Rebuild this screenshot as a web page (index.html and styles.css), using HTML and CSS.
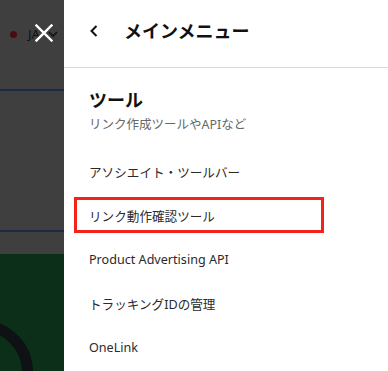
FILE: index.html
```html
<!DOCTYPE html>
<html lang="ja">
<head>
<meta charset="utf-8">
<link rel="stylesheet" href="styles.css">
</head>
<body>
<div class="page">
  <div class="backdrop">
    <div class="topbar">
      <span class="dot"></span>
      <span class="lang">JA</span>
      <svg class="caret" width="10" height="8" viewBox="0 0 10 8"><path d="M1 2 L5 6 L9 2" fill="none" stroke="#111" stroke-width="1.6"/></svg>
    </div>
    <div class="rule"></div>
    <div class="gray-mid"></div>
    <div class="rule"></div>
    <div class="gray-low"></div>
    <div class="green">
      <div class="ring"></div>
    </div>
    <svg class="close" width="18" height="18" viewBox="0 0 18 18"><path d="M1.5 1.5 L16.5 16.5 M16.5 1.5 L1.5 16.5" stroke="#fff" stroke-width="2.4" stroke-linecap="square"/></svg>
  </div>
  <nav class="panel">
    <div class="head">
      <svg class="back" width="10" height="14" viewBox="0 0 10 14"><path d="M7.5 2 L2.5 7 L7.5 12" fill="none" stroke="#111" stroke-width="2"/></svg>
      <span class="title">メインメニュー</span>
    </div>
    <div class="section">
      <div class="sec-title">ツール</div>
      <div class="sec-sub">リンク作成ツールやAPIなど</div>
    </div>
    <ul class="items">
      <li class="item">アソシエイト・ツールバー</li>
      <li class="item item-hl"><span class="hl">リンク動作確認ツール</span></li>
      <li class="item">Product Advertising API</li>
      <li class="item">トラッキングIDの管理</li>
      <li class="item">OneLink</li>
    </ul>
  </nav>
</div>
</body>
</html>
```
FILE: styles.css
```css
html, body {
  margin: 0;
  padding: 0;
  width: 388px;
  height: 371px;
  overflow: hidden;
  font-family: "Noto Sans", "Noto Sans CJK JP", sans-serif;
  background: #fff;
}
.page {
  display: flex;
  width: 388px;
  height: 371px;
}
.backdrop {
  position: relative;
  width: 64px;
  flex: none;
  display: flex;
  flex-direction: column;
  background: #3f3f3f;
  overflow: hidden;
}
.topbar {
  height: 89px;
  display: flex;
  align-items: flex-start;
  padding-top: 30px;
  box-sizing: border-box;
  padding-left: 10px;
}
.dot {
  width: 7px;
  height: 7px;
  border-radius: 50%;
  background: #4a0c14;
  margin-top: 1px;
}
.lang {
  margin-left: 11px;
  font-size: 13px;
  line-height: 9px;
  color: #111;
}
.caret {
  margin-left: 8px;
}
.rule {
  height: 2px;
  background: #1b2b45;
  flex: none;
}
.gray-mid {
  height: 139px;
  flex: none;
}
.gray-low {
  height: 22px;
  flex: none;
}
.green {
  flex: 1;
  background: #0b2f18;
  position: relative;
}
.ring {
  position: absolute;
  left: -71px;
  top: 66px;
  width: 82px;
  height: 82px;
  border: 11px solid #0e1215;
  border-radius: 50%;
}
.close {
  position: absolute;
  left: 35px;
  top: 24px;
}
.panel {
  flex: 1;
  background: #fff;
  display: flex;
  flex-direction: column;
}
.head {
  height: 68px;
  box-sizing: border-box;
  border-bottom: 1px solid #d5dbdb;
  display: flex;
  align-items: flex-start;
  padding: 19px 0 0 25px;
}
.back {
  margin-top: 5px;
}
.title {
  margin-left: 25px;
  font-size: 18px;
  line-height: 24px;
  font-weight: 700;
  color: #111;
}
.section {
  height: 81px;
  box-sizing: border-box;
  padding: 21px 0 0 25px;
}
.sec-title {
  font-size: 18px;
  line-height: 22px;
  font-weight: 700;
  color: #111;
}
.sec-sub {
  margin-top: 6px;
  font-size: 12.5px;
  line-height: 16px;
  color: #656969;
}
.items {
  list-style: none;
  margin: 0;
  padding: 0;
}
.item {
  height: 44px;
  display: flex;
  align-items: center;
  padding-left: 25px;
  font-size: 12.6px;
  color: #2a2a2a;
}
.item-hl {
  padding-left: 10px;
}
.hl {
  width: 250px;
  height: 36px;
  box-sizing: border-box;
  border: 3px solid #f2231b;
  display: flex;
  align-items: center;
  padding-left: 12px;
}
```
